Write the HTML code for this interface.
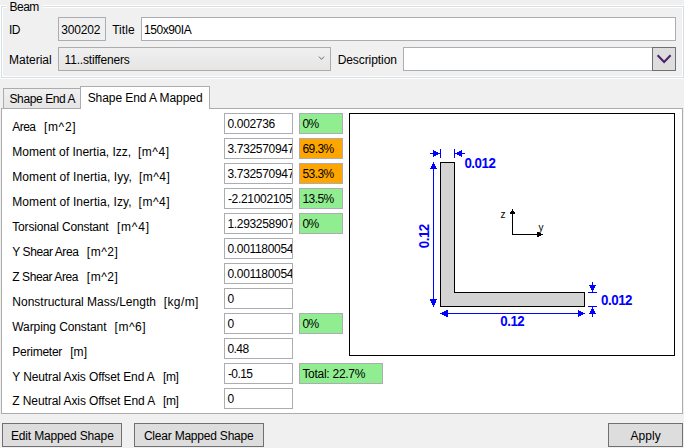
<!DOCTYPE html><html><head><meta charset="utf-8"><title>Beam</title><style>

html,body{margin:0;padding:0}
body{width:684px;height:448px;background:#f0f0f0;position:relative;overflow:hidden;font-family:"Liberation Sans", Arial, sans-serif;font-size:12px;color:#000}
.a{position:absolute;box-sizing:border-box}
.t{position:absolute;white-space:pre;line-height:0}
.tb{position:absolute;box-sizing:border-box;background:#fff;border:1px solid #abadb3;overflow:hidden;white-space:pre}
.btn{position:absolute;box-sizing:border-box;background:#ddd;border:1px solid #707070}
.g{background:#90ee90}.o{background:#ffa500}
.pc{position:absolute;box-sizing:border-box;border:1px solid #abadb3;height:21px;white-space:pre}

</style></head><body>
<div class="a" style="left:0;top:5px;width:685px;height:74px;border:1px solid #fff"></div>
<div class="a" style="left:1px;top:6px;width:683px;height:72px;border:1px solid #d5dfe5"></div>
<div class="a" style="left:2px;top:7px;width:681px;height:70px;border:1px solid #fff"></div>
<div class="a" style="left:7px;top:4px;width:36px;height:5px;background:#f0f0f0"></div>
<div class="a" style="left:58px;top:17px;width:48px;height:24px;border:1px solid #abadb3;background:#f0f0f0"></div>
<div class="tb" style="left:141px;top:17px;width:535px;height:24px"></div>
<div class="a" style="left:58px;top:47px;width:273px;height:24px;border:1px solid #acacac;background:linear-gradient(#f0f0f0,#e5e5e5)"></div>
<svg class="a" style="left:316px;top:53px" width="12" height="10" viewBox="0 0 12 10"><path d="M3 3.6 L5.5 6.4 L8 3.6" fill="none" stroke="#666" stroke-width="0.95"/></svg>
<div class="tb" style="left:403px;top:47px;width:250px;height:24px"></div>
<div class="btn" style="left:652px;top:47px;width:24px;height:24px"></div>
<svg class="a" style="left:652px;top:47px" width="25" height="24" viewBox="0 0 25 24"><path d="M5.6 8.2 L12.1 15 L18.6 8.2" fill="none" stroke="#4f2270" stroke-width="2.1"/></svg>
<div class="a" style="left:1px;top:108px;width:682px;height:306px;border:1px solid #acacac;background:#fff"></div>
<div class="a" style="left:3px;top:88px;width:78px;height:21px;border:1px solid #acacac;border-bottom:none;background:linear-gradient(#f0f0f0,#e5e5e5)"></div>
<div class="a" style="left:3px;top:108px;width:78px;height:1px;background:#acacac"></div>
<div class="a" style="left:80px;top:86px;width:130px;height:23px;border:1px solid #acacac;border-bottom:none;background:#fff"></div>
<div class="tb" style="left:224px;top:113px;width:69px;height:21px"><div class="t" style="left:2.40px;top:10.00px;letter-spacing:-0.314px">0.002736</div></div>
<div class="pc g" style="left:299px;top:113px;width:44px"><div class="t" style="left:2.40px;top:10.00px;letter-spacing:-0.550px">0%</div></div>
<div class="tb" style="left:224px;top:138px;width:69px;height:21px"><div class="t" style="left:2.40px;top:10.00px;letter-spacing:-0.314px">3.732570947</div></div>
<div class="pc o" style="left:299px;top:138px;width:44px"><div class="t" style="left:2.40px;top:10.00px;letter-spacing:-0.550px">69.3%</div></div>
<div class="tb" style="left:224px;top:163px;width:69px;height:21px"><div class="t" style="left:2.40px;top:10.00px;letter-spacing:-0.314px">3.732570947</div></div>
<div class="pc o" style="left:299px;top:163px;width:44px"><div class="t" style="left:2.40px;top:10.00px;letter-spacing:-0.550px">53.3%</div></div>
<div class="tb" style="left:224px;top:188px;width:69px;height:21px"><div class="t" style="left:2.90px;top:10.00px;letter-spacing:-0.314px">-2.21002105</div></div>
<div class="pc g" style="left:299px;top:188px;width:44px"><div class="t" style="left:2.40px;top:10.00px;letter-spacing:-0.550px">13.5%</div></div>
<div class="tb" style="left:224px;top:213px;width:69px;height:21px"><div class="t" style="left:2.40px;top:10.00px;letter-spacing:-0.314px">1.293258907</div></div>
<div class="pc g" style="left:299px;top:213px;width:44px"><div class="t" style="left:2.40px;top:10.00px;letter-spacing:-0.550px">0%</div></div>
<div class="tb" style="left:224px;top:238px;width:69px;height:21px"><div class="t" style="left:2.40px;top:10.00px;letter-spacing:-0.314px">0.001180054</div></div>
<div class="tb" style="left:224px;top:263px;width:69px;height:21px"><div class="t" style="left:2.40px;top:10.00px;letter-spacing:-0.314px">0.001180054</div></div>
<div class="tb" style="left:224px;top:288px;width:69px;height:21px"><div class="t" style="left:2.40px;top:10.00px;letter-spacing:0.000px">0</div></div>
<div class="tb" style="left:224px;top:313px;width:69px;height:21px"><div class="t" style="left:2.40px;top:10.00px;letter-spacing:0.000px">0</div></div>
<div class="pc g" style="left:299px;top:313px;width:44px"><div class="t" style="left:2.40px;top:10.00px;letter-spacing:-0.550px">0%</div></div>
<div class="tb" style="left:224px;top:338px;width:69px;height:21px"><div class="t" style="left:2.40px;top:10.00px;letter-spacing:-0.550px">0.48</div></div>
<div class="tb" style="left:224px;top:363px;width:69px;height:21px"><div class="t" style="left:2.90px;top:10.00px;letter-spacing:-0.550px">-0.15</div></div>
<div class="pc g" style="left:299px;top:363px;width:84px"><div class="t" style="left:2.40px;top:10.00px;letter-spacing:-0.273px">Total: 22.7%</div></div>
<div class="tb" style="left:224px;top:388px;width:69px;height:21px"><div class="t" style="left:2.40px;top:10.00px;letter-spacing:0.000px">0</div></div>
<div class="a" style="left:349px;top:113px;width:326px;height:243px;border:1px solid #000;background:#fff"></div>
<svg class="a" style="left:350px;top:114px" width="324" height="241" viewBox="350 114 324 241" font-family="&quot;Liberation Sans&quot;, Arial, sans-serif">
<g shape-rendering="crispEdges">
<polygon points="440.5,162.5 454.5,162.5 454.5,292.5 584.5,292.5 584.5,306.5 440.5,306.5" fill="#d3d3d3" stroke="#000" stroke-width="1"/>
<g stroke="#00f" stroke-width="1" fill="none">
<line x1="440.5" y1="149" x2="440.5" y2="158"/>
<line x1="454.5" y1="149" x2="454.5" y2="158"/>
<line x1="430" y1="153.5" x2="440" y2="153.5"/>
<line x1="455" y1="153.5" x2="465" y2="153.5"/>
<line x1="433.5" y1="163" x2="433.5" y2="306"/>
<line x1="441" y1="313.5" x2="584" y2="313.5"/>
<line x1="588" y1="292.5" x2="597" y2="292.5"/>
<line x1="588" y1="306.5" x2="597" y2="306.5"/>
<line x1="592.5" y1="282" x2="592.5" y2="292"/>
<line x1="592.5" y1="307" x2="592.5" y2="317"/>
</g>
<g fill="#00f" stroke="none">
<polygon points="440.4,153.5 433.1,157.1 433.1,149.9"/>
<polygon points="454.6,153.5 461.9,149.9 461.9,157.1"/>
<polygon points="433.5,162.0 437.1,169.3 429.9,169.3"/>
<polygon points="433.5,306.6 429.9,299.3 437.1,299.3"/>
<polygon points="440.2,313.5 447.5,309.9 447.5,317.1"/>
<polygon points="584.8,313.5 577.5,317.1 577.5,309.9"/>
<polygon points="592.5,292.4 588.9,285.1 596.1,285.1"/>
<polygon points="592.5,306.6 596.1,313.9 588.9,313.9"/>
</g>
<!-- axes -->
<g fill="#000" stroke="none">
<rect x="512" y="209" width="1" height="26"/>
<rect x="512" y="234" width="31" height="1"/>
<rect x="511" y="211" width="3" height="1"/>
<rect x="510" y="212" width="5" height="2"/>
<rect x="537" y="232" width="2" height="5"/>
<rect x="539" y="233" width="2" height="3"/>
</g>
</g>
<g fill="#00f" font-weight="bold" font-size="13.33" letter-spacing="-0.45">
<text transform="translate(464.4,167.6) scale(1,1.06)">0.012</text>
<text transform="translate(601,304.8) scale(1,1.06)">0.012</text>
<text transform="translate(500.2,326.1) scale(1,1.06)">0.12</text>
<text transform="translate(428.8,248.3) rotate(-90) scale(1,1.06)">0.12</text>
</g>
<g fill="#000" font-size="10">
<text x="500.6" y="218">z</text>
<text x="538.6" y="231">y</text>
</g>
</svg>

<div class="btn" style="left:2px;top:423px;width:120px;height:24px"></div>
<div class="btn" style="left:134px;top:423px;width:130px;height:24px"></div>
<div class="btn" style="left:608px;top:423px;width:75px;height:24px"></div>
<div class="t" id="t0" style="left:9.60px;top:7.00px;font-size:12px;letter-spacing:-0.550px;">Beam</div>
<div class="t" id="t1" style="left:9.00px;top:30.00px;font-size:12px;letter-spacing:-0.550px;">ID</div>
<div class="t" id="t2" style="left:61.20px;top:30.00px;font-size:12px;letter-spacing:-0.160px;">300202</div>
<div class="t" id="t3" style="left:112.20px;top:30.00px;font-size:12px;letter-spacing:0.050px;">Title</div>
<div class="t" id="t4" style="left:144.00px;top:30.00px;font-size:12px;letter-spacing:-0.429px;">150x90IA</div>
<div class="t" id="t5" style="left:9.00px;top:60.00px;font-size:12px;letter-spacing:0.000px;">Material</div>
<div class="t" id="t6" style="left:64.60px;top:60.00px;font-size:12px;letter-spacing:-0.185px;">11..stiffeners</div>
<div class="t" id="t7" style="left:337.70px;top:60.00px;font-size:12px;letter-spacing:-0.080px;">Description</div>
<div class="t" id="t8" style="left:9.50px;top:99.00px;font-size:12px;letter-spacing:-0.400px;">Shape End A</div>
<div class="t" id="t9" style="left:87.70px;top:98.00px;font-size:12px;letter-spacing:-0.071px;">Shape End A Mapped</div>
<div class="t" id="t10" style="left:12.30px;top:127.00px;font-size:12px;letter-spacing:-0.550px;">Area</div>
<div class="t" id="t11" style="left:43.90px;top:127.00px;font-size:12px;letter-spacing:0.700px;">[m^2]</div>
<div class="t" id="t12" style="left:12.30px;top:152.00px;font-size:12px;letter-spacing:0.009px;">Moment of Inertia, Izz,</div>
<div class="t" id="t13" style="left:138.00px;top:152.00px;font-size:12px;letter-spacing:0.500px;">[m^4]</div>
<div class="t" id="t14" style="left:12.30px;top:177.00px;font-size:12px;letter-spacing:0.073px;">Moment of Inertia, Iyy,</div>
<div class="t" id="t15" style="left:138.90px;top:177.00px;font-size:12px;letter-spacing:0.500px;">[m^4]</div>
<div class="t" id="t16" style="left:12.30px;top:202.00px;font-size:12px;letter-spacing:0.064px;">Moment of Inertia, Izy,</div>
<div class="t" id="t17" style="left:138.60px;top:202.00px;font-size:12px;letter-spacing:0.500px;">[m^4]</div>
<div class="t" id="t18" style="left:12.30px;top:227.00px;font-size:12px;letter-spacing:-0.176px;">Torsional Constant</div>
<div class="t" id="t19" style="left:117.00px;top:227.00px;font-size:12px;letter-spacing:0.750px;">[m^4]</div>
<div class="t" id="t20" style="left:12.30px;top:252.00px;font-size:12px;letter-spacing:-0.418px;">Y Shear Area</div>
<div class="t" id="t21" style="left:86.80px;top:252.00px;font-size:12px;letter-spacing:0.500px;">[m^2]</div>
<div class="t" id="t22" style="left:12.30px;top:277.00px;font-size:12px;letter-spacing:-0.418px;">Z Shear Area</div>
<div class="t" id="t23" style="left:86.80px;top:277.00px;font-size:12px;letter-spacing:0.500px;">[m^2]</div>
<div class="t" id="t24" style="left:12.30px;top:302.00px;font-size:12px;letter-spacing:0.008px;">Nonstructural Mass/Length</div>
<div class="t" id="t25" style="left:163.70px;top:302.00px;font-size:12px;letter-spacing:0.400px;">[kg/m]</div>
<div class="t" id="t26" style="left:12.30px;top:327.00px;font-size:12px;letter-spacing:-0.093px;">Warping Constant</div>
<div class="t" id="t27" style="left:114.60px;top:327.00px;font-size:12px;letter-spacing:0.500px;">[m^6]</div>
<div class="t" id="t28" style="left:12.30px;top:352.00px;font-size:12px;letter-spacing:-0.250px;">Perimeter</div>
<div class="t" id="t29" style="left:70.20px;top:352.00px;font-size:12px;letter-spacing:0.100px;">[m]</div>
<div class="t" id="t30" style="left:12.30px;top:377.00px;font-size:12px;letter-spacing:-0.123px;">Y Neutral Axis Offset End A</div>
<div class="t" id="t31" style="left:162.90px;top:377.00px;font-size:12px;letter-spacing:-0.300px;">[m]</div>
<div class="t" id="t32" style="left:12.30px;top:401.00px;font-size:12px;letter-spacing:-0.085px;">Z Neutral Axis Offset End A</div>
<div class="t" id="t33" style="left:162.90px;top:401.00px;font-size:12px;letter-spacing:-0.300px;">[m]</div>
<div class="t" id="t34" style="left:11.00px;top:436.00px;font-size:12px;letter-spacing:-0.163px;">Edit Mapped Shape</div>
<div class="t" id="t35" style="left:143.90px;top:436.00px;font-size:12px;letter-spacing:-0.212px;">Clear Mapped Shape</div>
<div class="t" id="t36" style="left:630.50px;top:436.00px;font-size:12px;letter-spacing:0.050px;">Apply</div>
</body></html>
